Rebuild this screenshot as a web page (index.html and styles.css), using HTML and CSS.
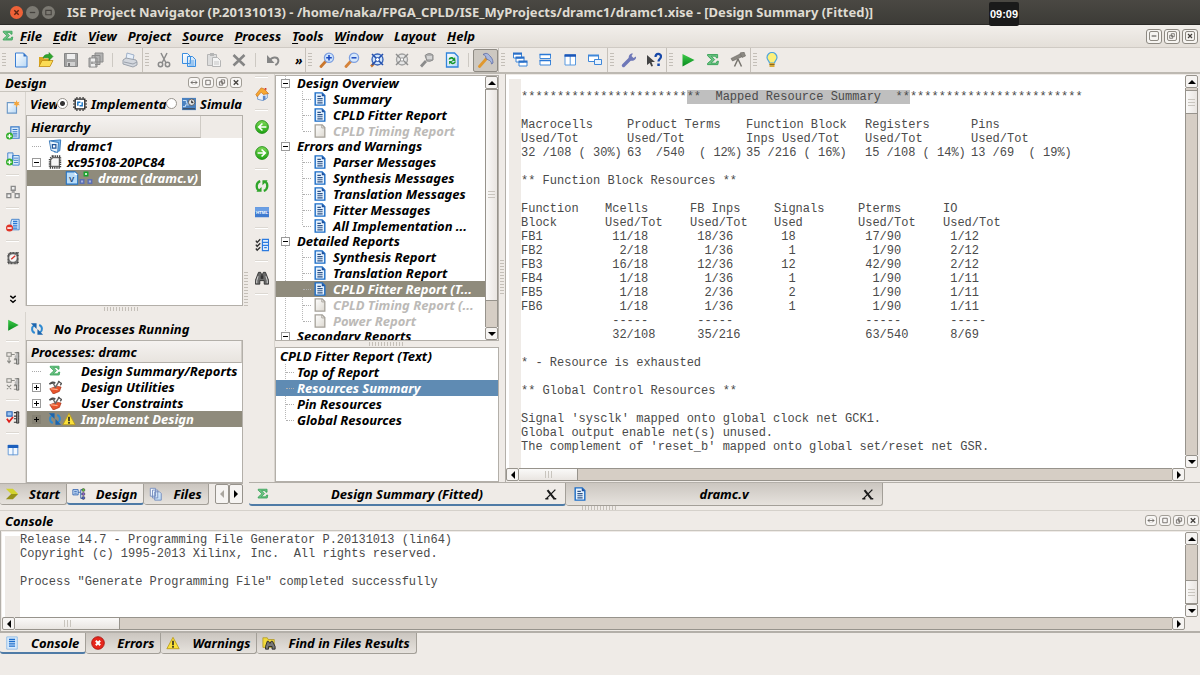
FILE: index.html
```html
<!DOCTYPE html>
<html lang="en">
<head>
    <meta charset="UTF-8">
    <meta name="viewport" content="width=device-width, initial-scale=1.0">
    <title>ISE Project Navigator</title>
    <link rel="stylesheet" href="styles.css">
</head>
<body>
    <!-- icon set -->
    <svg class="sprite" aria-hidden="true">
        <defs>
            <linearGradient id="gPaper" x1="0" y1="0" x2="1" y2="1"><stop offset="0" stop-color="#fff"/><stop offset="1" stop-color="#b9d8f5"/></linearGradient>
            <linearGradient id="gGrey" x1="0" y1="0" x2="1" y2="1"><stop offset="0" stop-color="#fff"/><stop offset="1" stop-color="#dcd8d0"/></linearGradient>
            <linearGradient id="gBall" x1="0" y1="0" x2="0" y2="1"><stop offset="0" stop-color="#7ed957"/><stop offset="1" stop-color="#1fa413"/></linearGradient>
            <linearGradient id="gPlay" x1="0" y1="0" x2="0" y2="1"><stop offset="0" stop-color="#3fcb4a"/><stop offset="1" stop-color="#068a1c"/></linearGradient>
        </defs>
        <symbol id="sigma" viewBox="-1 -1 19 19"><path d="M2 2h12v4h-1.500l-.8-2H6.500l4 4-4.200 4.300h6l1-2.300H15l-.8 4H2v-1.400L7 8.200 2 3.400z" fill="#6cc283" stroke="#2e9e50"/></symbol>
        <symbol id="new" viewBox="0 0 16 16"><path d="M2.500 1h8l3.500 3.500V15h-11.500z" fill="url(#gPaper)" stroke="#3b7fd4"/><path d="M10.500 1v3.500H14z" fill="#2f6fc4"/></symbol>
        <symbol id="open" viewBox="0 0 16 16"><path d="M1 14V5h4l1 1.500h6V14z" fill="#d9a520"/><path d="M1 14.500 4 8.500h11l-3 6z" fill="#fbdc55" stroke="#c08a10" stroke-width=".8"/><path d="M5 6C6 3 8 2 11 2.500V.5l4 4-4 4V6C9 5.500 7 5.500 5 6z" fill="#2fa52c" stroke="#157a18" stroke-width=".5"/></symbol>
        <symbol id="save" viewBox="0 0 16 16"><path d="M1.500 1.500h13v13h-13z" fill="#a2a2a2" stroke="#858585"/><path d="M4 2h8v5H4z" fill="#eee"/><path d="M4 10h8v4H4z" fill="#d0d0d0"/><path d="M5 11h2v3H5z" fill="#777"/></symbol>
        <symbol id="saveall" viewBox="0 0 16 16"><path d="M7 1h8v9H7zM4 3.500h8v9H4zM1 6h8v9H1z" fill="#b3b3b3" stroke="#8a8a8a"/><path d="M3 6.500h4v3H3zM3 12h4v2.500H3z" fill="#eee"/></symbol>
        <symbol id="print" viewBox="0 0 16 16"><path d="m5 1 7 2-1 5-7-1z" fill="#e8f0fa" stroke="#9fb0c8"/><path d="m1 8 3-2 10 2 1 2v3l-4 2L1 12z" fill="#d3d7de" stroke="#9aa1ab"/><path d="m2 10 9 2 4-2" fill="none" stroke="#9aa1ab"/></symbol>
        <symbol id="cut" viewBox="0 0 16 16"><path d="m5 1 5 10M11 1 6 11" stroke="#8a8a8a" stroke-width="1.500"/><circle cx="4.500" cy="12.500" r="2.200" fill="none" stroke="#8a8a8a" stroke-width="1.500"/><circle cx="11.500" cy="12.500" r="2.200" fill="none" stroke="#8a8a8a" stroke-width="1.500"/></symbol>
        <symbol id="copy" viewBox="0 0 16 16"><path d="M1.500 1.500h5l3 3v7h-8zM6.500 4.500h5l3 3v7h-8z" fill="url(#gPaper)" stroke="#3b8ee0"/><path d="M8 9h5M8 11h5M8 13h5" stroke="#6aa9e8"/></symbol>
        <symbol id="paste" viewBox="0 0 16 16"><path d="M1.500 2.500h9v11h-9z" fill="#ddd" stroke="#b5b5b5"/><path d="M4 1h4v3H4z" fill="#b5b5b5"/><path d="M6.500 5.500h5l3 3v6h-8z" fill="#f4f4f4" stroke="#b5b5b5"/><path d="M8 10h5M8 12h5" stroke="#c5c5c5"/></symbol>
        <symbol id="del" viewBox="0 0 16 16"><path d="m2.500 3 11 10.500M13.500 3l-11 10.500" stroke="#858585" stroke-width="2.600"/></symbol>
        <symbol id="undo" viewBox="0 0 16 16"><path d="M5 8.500C6 5 12.500 4 13.300 8c.4 2.500-1 4-3 5" fill="none" stroke="#858585" stroke-width="2"/><path d="M2 3v8h7.500z" fill="#858585"/></symbol>
        <symbol id="zoomin" viewBox="0 0 16 16"><path d="m2 14.500 5-5.500" stroke="#c9762c" stroke-width="2.800" stroke-linecap="round"/><circle cx="10" cy="5.800" r="4.600" fill="#cfe4fb" stroke="#7d9fe0" stroke-width="1.300"/><path d="M10 3v5.500M7.200 5.800h5.600" stroke="#1c49c0" stroke-width="1.600"/></symbol>
        <symbol id="zoomout" viewBox="0 0 16 16"><path d="m2 14.500 5-5.500" stroke="#d5833a" stroke-width="2.800" stroke-linecap="round"/><circle cx="10" cy="5.800" r="4.600" fill="#d6e8fb" stroke="#7d9fe0" stroke-width="1.300"/><path d="M7.500 5.800h5" stroke="#1c49c0" stroke-width="1.500"/></symbol>
        <symbol id="zoomfit" viewBox="0 0 16 16"><path d="m2 14.500 3-3" stroke="#c9762c" stroke-width="2.500"/><circle cx="8.500" cy="7.500" r="5.500" fill="#cfe4fb" stroke="#3562b8" stroke-width="1.300"/><path d="m3 2 4 4m7-4-4 4m4 7-4-4m-7 4 4-4" stroke="#234fae" stroke-width="1.600"/><circle cx="8.500" cy="7.500" r="2" fill="#fff" stroke="#234fae"/></symbol>
        <symbol id="zoomsel" viewBox="0 0 16 16"><circle cx="8" cy="7.500" r="5.500" fill="#e6e6e6" stroke="#a0a0a0" stroke-width="1.300"/><path d="m2 2 4 4m8-4-4 4m4 7-4-4m-8 4 4-4" stroke="#8d8d8d" stroke-width="1.500"/><path d="M6.500 6h3v3h-3z" fill="#fff" stroke="#999"/></symbol>
        <symbol id="mag" viewBox="0 0 16 16"><path d="m2 14.500 5-5.500" stroke="#8b8b8b" stroke-width="2.800"/><path d="M6 3.500Q10 0 14 3v5q-3 2-6 1z" fill="#b0b0b0" stroke="#8a8a8a"/><path d="M8 4h5v3H8z" fill="#d5d5d5"/></symbol>
        <symbol id="redoc" viewBox="0 0 16 16"><path d="M2.500 1h8l3.500 3.500V15h-11.500z" fill="url(#gPaper)" stroke="#2f84dc" stroke-width="1.300"/><path d="M4.500 7.500c1-3 4-3 5.500-1l1-1.500.5 4-4-.3L9 7.500c-1-1-2-1-3 0zM12 9.500c-1 3-4 3.500-5.500 1.500l-1.200 1.500L5 9l4 .2-1.500 1c1 .8 2 .6 3-.7z" fill="#15962a"/></symbol>
        <symbol id="hammer" viewBox="0 0 16 16"><path d="m1.500 14.500 7-8" stroke="#e0982e" stroke-width="2.800" stroke-linecap="round"/><path d="M5 2.500c3-2 5-1 6.500 1 2 2 3.500 4 3.500 7.500l-1.500 1c0-2-1.500-3.500-3-4L8 6.500C8 4 7 3 5 2.500z" fill="#a9b7dd" stroke="#5d6ba5" stroke-width=".8"/></symbol>
        <symbol id="cascade" viewBox="0 0 16 16"><path d="M1.500 2h8v4h-8zM4 6h8v4H4zM7 10h8v4H7z" fill="#fff" stroke="#3f87d9"/><path d="M1 1.500h9M3.500 5.500h9M6.500 9.500h9" stroke="#2a6fc8" stroke-width="2"/></symbol>
        <symbol id="tileh" viewBox="0 0 16 16"><path d="M3 2.500h10.500v4H3zM3 8.500h10.500v4.500H3z" fill="#fff" stroke="#3f87d9"/><path d="M2.500 2.500h11.500M2.500 8.500h11.500" stroke="#2a78d6" stroke-width="1.500"/></symbol>
        <symbol id="tilev" viewBox="0 0 16 16"><path d="M3 3h10.500v10H3zM8.200 4v9" fill="#fff" stroke="#5a9ae0"/><path d="M2.500 3.500h11.500" stroke="#1b56b8" stroke-width="2.500"/></symbol>
        <symbol id="wins" viewBox="0 0 16 16"><path d="M1.500 3.500h10v6h-10z" fill="#fff" stroke="#3f87d9"/><path d="M1 3.500h11" stroke="#3f87d9" stroke-width="2"/><path d="M7.500 7.500h7v5h-7z" fill="#e7f2fd" stroke="#3f87d9"/></symbol>
        <symbol id="wrench" viewBox="0 0 16 16"><path d="m2.500 13.500 7-7" stroke="#6f78b8" stroke-width="3.400" stroke-linecap="round"/><path d="M8 7C7 4 9 1 12 1.500L10.500 4l2 2L15 4.500c.5 3-2.500 5-5.500 4z" fill="#6f78b8"/></symbol>
        <symbol id="whats" viewBox="0 0 16 16"><path d="m1 3 8 7H5.500l1.500 4-1.700.6L3.800 11 1 13z" fill="#444"/><path d="M9.500 5c0-4 5.500-4 5.500-.5 0 2.500-2.500 2.500-2.500 5" fill="none" stroke="#1748a8" stroke-width="2.200"/><path d="M11.300 11.500h2.500V14h-2.500z" fill="#1748a8"/></symbol>
        <symbol id="play" viewBox="0 0 16 16"><path d="m2.500 2 12 6-12 6.500z" fill="url(#gPlay)"/></symbol>
        <symbol id="scope" viewBox="0 0 16 16"><path d="m1 6.500 9-4.500 1.500 3-9 4zM10 1l4-1 1.500 4-3.500 1.500z" fill="#8b8882" stroke="#6a6762" stroke-width=".6"/><path d="M8 7 4.500 14.500M8 7l3.500 7.500" stroke="#77746e" stroke-width="1.500"/></symbol>
        <symbol id="bulb" viewBox="0 0 16 16"><path d="M5.500 11c0-2-2.500-3-2.500-5.500a5 5 0 0 1 10 0C13 8 10.500 9 10.500 11z" fill="#fdf07a" stroke="#4fa5de" stroke-width="1.200"/><path d="M5.500 11h5v4h-5z" fill="#d7a93a"/><path d="M5.500 12.500h5" stroke="#8a6a20"/></symbol>
        <symbol id="newsrc" viewBox="0 0 16 16"><path d="M1.500 3h10.500v12h-10.500z" fill="url(#gPaper)" stroke="#6c98c6" stroke-width="1.300"/><path d="m12 0 1 2.500L15.500 2l-1.300 2.200L16 6l-2.700-.2L12 8.500l-1-2.800L8.500 6 10 4.200 8.800 2l2.400.5z" fill="#f4a63c"/></symbol>
        <symbol id="addsrc" viewBox="0 0 16 16"><path d="M5.500 1H15v13H5.500z" fill="#d8eafb" stroke="#3a7bc8" stroke-width="1.300"/><path d="M7.500 4h5.500M7.500 6.500h5.500M7.500 9h5.500M8 11.500h5" stroke="#3a7bc8" stroke-width="1.200"/><circle cx="4" cy="11.500" r="4" fill="#34b02c"/><path d="M4 9v5M1.500 11.500h5" stroke="#fff" stroke-width="1.500"/></symbol>
        <symbol id="addcopy" viewBox="0 0 16 16"><path d="M2 1h6v9H2zM7.500 4h7.500v11H7.500z" fill="#d8eafb" stroke="#3a7bc8"/><path d="M9 7h5M9 9.500h5M9 12h5" stroke="#3a7bc8"/><circle cx="4" cy="11.500" r="4" fill="#34b02c"/><path d="M4 9v5M1.500 11.500h5" stroke="#fff" stroke-width="1.500"/></symbol>
        <symbol id="blocks" viewBox="0 0 16 16"><path d="M6 1.500h4.500v4.500H6zM1 10h4.500v4.500H1zM10.500 10H15v4.500h-4.500zM6.500 8h3.500" fill="#eee" stroke="#8a8a8a" stroke-width="1.500"/></symbol>
        <symbol id="remsrc" viewBox="0 0 16 16"><path d="M6.500 1.500H15v12H5.500V5z" fill="#d8eafb" stroke="#3a7bc8"/><path d="M8 4h5M8 6.500h5M8 9h5M8 11.500h5" stroke="#2b79d3" stroke-width="1.500"/><circle cx="4" cy="11.500" r="4" fill="#e03427"/><path d="M1.500 11.500h5" stroke="#fff" stroke-width="1.800"/></symbol>
        <symbol id="gauge" viewBox="0 0 16 16"><path d="M2.500 4 5 2h8.500v12h-11z" fill="#777" stroke="#444" stroke-dasharray="1 .6" stroke-width="2"/><circle cx="8" cy="8" r="4.200" fill="#f5f5f5"/><path d="m6 9.500 4.500-4" stroke="#d3332a" stroke-width="1.600"/></symbol>
        <symbol id="chip1" viewBox="0 0 16 16"><path d="M1 2h5v4H1zM6 4h4M3.500 7v6M1.500 11l2 2.500 2-2.500" fill="none" stroke="#8b8b86" stroke-width="1.200"/><path d="M10 2h5M10 6h5M9 10h6M9 14h6" stroke="#8b8b86" stroke-width="1.300"/><path d="M12 2h2.500v13H12V9H9.500" fill="#bbb" stroke="#6a6a66"/></symbol>
        <symbol id="chip2" viewBox="0 0 16 16"><path d="M1 2h5v4H1zM6 4h4M1 9l5 5M6 9l-5 5" fill="none" stroke="#8b8b86" stroke-width="1.200"/><path d="M10 2h5M10 6h5M9 10h6M9 14h6" stroke="#8b8b86" stroke-width="1.300"/><path d="M12 2h2.500v13H12V9H9.500" fill="#bbb" stroke="#6a6a66"/></symbol>
        <symbol id="chip3" viewBox="0 0 16 16"><path d="M1 2h6v5H1z" fill="#9cc4f0" stroke="#2a66b8" stroke-width="1.300"/><path d="M9 3h6M9 7h6M9 10h6M9 14h6" stroke="#333" stroke-width="1.400"/><path d="M12 2h2.500v13H12z" fill="#888" stroke="#333"/><path d="m1 10 2.500 3.500L8 8" fill="none" stroke="#dd1f1a" stroke-width="2"/></symbol>
        <symbol id="table" viewBox="0 0 16 16"><path d="M2.500 2.500h11v11h-11zM8 3v11" fill="#f2f8ff" stroke="#5b92d4"/><path d="M2 4h12" stroke="#1c5fbd" stroke-width="3.500"/></symbol>
        <symbol id="home" viewBox="0 0 16 16"><path d="M3 8v6l6 1.500 5-3V7L9 3z" fill="#eaf1fb" stroke="#6c94c9"/><path d="M1 8.500 7 1l3 1 5.500 5.500-6 1L7 6l-4.500 5z" fill="#f7a832" stroke="#c7701a" stroke-width=".8"/><path d="M9 10h3v4.500l-3 .8z" fill="#5e88c6"/><path d="M11 1h2v3l-2-1.500z" fill="#d43a2a"/></symbol>
        <symbol id="back" viewBox="0 0 16 16"><circle cx="8" cy="8" r="7.300" fill="url(#gBall)" stroke="#1c8a12"/><path d="M13 8H5M8.500 4 4.300 8l4.200 4" fill="none" stroke="#fff" stroke-width="1.900"/></symbol>
        <symbol id="fwd" viewBox="0 0 16 16"><circle cx="8" cy="8" r="7.300" fill="url(#gBall)" stroke="#1c8a12"/><path d="M3 8h8M7.500 4l4.200 4-4.200 4" fill="none" stroke="#fff" stroke-width="1.900"/></symbol>
        <symbol id="reload" viewBox="0 0 16 16"><path d="M6 2.500C1 4 1 10.500 4 13" fill="none" stroke="#2fa52a" stroke-width="2.600"/><path d="M1.500 14.500h6V9z" fill="#2fa52a"/><path d="M10 13.500C15 12 15 5.500 12 3" fill="none" stroke="#2fa52a" stroke-width="2.600"/><path d="M14.500 1.500h-6V7z" fill="#2fa52a"/></symbol>
        <symbol id="html" viewBox="0 0 16 16"><path d="M0 2.500h16v11.500H0z" fill="#3f7bd0"/><path d="M0 2.500h16v5.500H0z" fill="#6b9fe4"/><text x="8" y="10.500" text-anchor="middle" font-size="5" font-style="normal" font-weight="bold" fill="#fff" font-family="Liberation Sans, sans-serif">HTML</text></symbol>
        <symbol id="checks" viewBox="0 0 16 16"><path d="m1 3 1.500 2L6 1.500M1 7.500l1.500 2L6 6M1 12l1.500 2L6 10.500" fill="none" stroke="#333" stroke-width="1.600"/><path d="M8.500 1.500h7v13h-7z" fill="#e3f0fd" stroke="#2c7be0" stroke-width="1.400"/><path d="M8 5h8M8 8.500h8M10.500 11h3" stroke="#2c7be0" stroke-width="1.500"/></symbol>
        <symbol id="binoc" viewBox="0 0 16 16"><path d="M4 1.500h2.500L8 5l1.500-3.500H12l3.500 9V15h-5v-4h-5v4h-5v-4.500z" fill="#6b6b6b" stroke="#262626" stroke-width=".9"/><path d="M3.500 6 2 11v3M12.500 6l1.500 5v3" stroke="#d9d9d9" stroke-width="1.100" fill="none"/><path d="M6.500 5h3v4h-3z" fill="#333"/></symbol>
        <symbol id="doc" viewBox="0 0 16 16"><path d="M2.500 1h8l3 3v11h-11z" fill="#e6f2fe" stroke="#1d6dc6" stroke-width="1.600"/><path d="M10 1v3.800h3.800z" fill="#1d4f9c"/><path d="M5 5h4M5 7.500h6M5 10h6M5 12.500h6" stroke="#2d5388" stroke-width="1.300"/></symbol>
        <symbol id="blank" viewBox="0 0 16 16"><path d="M2.500 1h8l3 3v11h-11z" fill="url(#gGrey)" stroke="#a6a29a" stroke-width="1.500"/><path d="M10 1v3.500h3.500" fill="none" stroke="#a6a29a"/></symbol>
        <symbol id="proj" viewBox="0 0 16 16"><path d="M3 2 14.500 1l-1 12.500-6 1.500z" fill="#7ab8ee" stroke="#2a6fb4"/><path d="m1.500 2 10.500 2-1 11.500L3.500 13z" fill="#e7f3fd" stroke="#2a6fb4"/><path d="M5 6.500h4v4H5z" fill="#fff" stroke="#1f559a" stroke-width="1.400"/></symbol>
        <symbol id="chip" viewBox="0 0 16 16"><path d="M3 5.500 5.500 3H13v10H3z" fill="#f6f6f6" stroke="#6a6a6a" stroke-width="1.400"/><path d="M5 1.500h9v13H2V4.500z" fill="none" stroke="#444" stroke-width="2.200" stroke-dasharray="1.500 1"/></symbol>
        <symbol id="vfile" viewBox="0 0 16 16"><path d="M1.500 1h10l3 3v11h-13z" fill="#b9dcf8" stroke="#2172c4" stroke-width="1.200"/><path d="M11 1v3.500h3.500z" fill="#fff"/><text x="7.500" y="12" text-anchor="middle" font-size="9" font-style="normal" font-weight="bold" fill="#1f4878" font-family="Liberation Sans, sans-serif">V</text></symbol>
        <symbol id="blocksc" viewBox="0 0 16 16"><path d="M6 1.500h4v4H6z" fill="#c6f0c8" stroke="#16a32a" stroke-width="1.600"/><path d="M1.500 10h4v4h-4zM10.500 10h4v4h-4z" fill="#aab5df" stroke="#5b6fb5" stroke-width="1.600"/></symbol>
        <symbol id="tools" viewBox="0 0 16 16"><path d="m2 10 8-3 5 1-2 5-7 3z" fill="#e8542c" stroke="#a02d12" stroke-width=".7"/><path d="m3 10 8 1" stroke="#ffb08a" stroke-width="1.200"/><path d="M1 4c3-3 6-3 8-1L7.500 4.500C6 4 4 4.500 2 5.500z" fill="#4d4d4d"/><path d="m6 4 3 5M13 1 8 9" stroke="#666" stroke-width="1.600"/><path d="M11.500 1.500 15.500 4 14 6" stroke="#555" fill="none" stroke-width="1.500"/></symbol>
        <symbol id="sync" viewBox="0 0 16 16"><path d="M5.500 12.500C1.500 11 1.500 6 4.500 4" fill="none" stroke="#2f8ad2" stroke-width="2.300"/><path d="M1 1.500h6.500V8z" fill="#1c65ae"/><path d="M10.500 3.500c4 1.500 4 6.500 1 8.500" fill="none" stroke="#2f8ad2" stroke-width="2.300"/><path d="M15 14.500H8.500V8z" fill="#1c65ae"/></symbol>
        <symbol id="warn" viewBox="0 0 16 16"><path d="M8 1.500 15 14.500H1z" fill="#fbe13a" stroke="#b89a1e" stroke-linejoin="round"/><path d="M8 5.500v5M8 11.500v2" stroke="#222" stroke-width="1.800"/></symbol>
        <symbol id="impl" viewBox="0 0 16 16"><path d="M2.500 2.500h11v11h-11z" fill="#fff" stroke="#222" stroke-width="1.500"/><path d="M4.500 0v2M8 0v2M11.500 0v2M4.500 14v2M8 14v2M11.500 14v2M0 4.500h2M0 8h2M0 11.500h2M14 4.500h2M14 8h2M14 11.500h2" stroke="#222" stroke-width="1.300"/><path d="M5.500 10V6h3M10.500 6v4h-3" fill="none" stroke="#1f7ac9" stroke-width="1.700"/></symbol>
        <symbol id="sim" viewBox="0 0 16 16"><path d="M0 1h16v14H0z" fill="#4b82c0"/><path d="M1 4h4v3h4M1 11h3V9h4" stroke="#d5e9fb" fill="none"/><circle cx="11" cy="6" r="3.700" fill="#e4e4e4" stroke="#555"/><path d="M11 4v2.500h2M1 13.500h14" stroke="#333"/></symbol>
        <symbol id="start" viewBox="0 0 16 16"><path d="M1 2h8l6 6H7z" fill="#d3d32f"/><path d="M7 8h8l-6 6H1z" fill="#96921a"/></symbol>
        <symbol id="design" viewBox="0 0 16 16"><path d="M1 3h6v6H1z" fill="#d5e7fb" stroke="#2b5fae"/><path d="M2.500 5h3M2.500 7h3M7 6h3M10 3v10M10 3h2M10 8h2M10 13h2" stroke="#2b5fae"/><circle cx="13" cy="3.500" r="1.700" fill="#5fc23a" stroke="#333" stroke-width=".6"/><circle cx="13" cy="8" r="1.700" fill="#8a5fd0" stroke="#333" stroke-width=".6"/><circle cx="13" cy="12.500" r="1.700" fill="#4c62c8" stroke="#333" stroke-width=".6"/></symbol>
        <symbol id="files" viewBox="0 0 16 16"><path d="M1.500 1.500h6v9h-6zM4 3.500h6v9H4zM6.500 5.500H12l2 2v7.500H6.500z" fill="url(#gPaper)" stroke="#7089bd"/></symbol>
        <symbol id="list" viewBox="0 0 16 16"><path d="M2 1h12v14H2z" fill="#d9ebfc" stroke="#8db9e5"/><path d="M4.500 4h7M4.500 6.500h7M4.500 9h7M4.500 11.500h7" stroke="#1b6dcc" stroke-width="1.500"/></symbol>
        <symbol id="error" viewBox="0 0 16 16"><circle cx="8" cy="8" r="7.200" fill="#e6261c" stroke="#a81410"/><path d="m5.500 5.500 5 5m0-5-5 5" stroke="#fff" stroke-width="2.300"/></symbol>
        <symbol id="find" viewBox="0 0 16 16"><path d="M1 2h5l1 2h7v9H1z" fill="#f2da3a" stroke="#a88f1c" stroke-width=".8"/><path d="M6 6h1.500L9 8.500 10.500 6H12l3 6v3h-3.500v-3h-4v3H4v-3z" fill="#777" stroke="#222"/></symbol>
        <symbol id="cross" viewBox="0 0 16 16"><path d="M4 3.500 11.500 13" stroke="#1a1a1a" stroke-width="2.400"/><path d="M13 3 3 13M1.500 13.500h3.500M10.500 13.500H14" stroke="#1a1a1a" stroke-width="1.600"/></symbol>
        <symbol id="dfloat" viewBox="0 0 12 12"><path d="M2 6h8M4.500 3.500 2 6l2.500 2.500M7.500 3.500 10 6 7.500 8.500" fill="none" stroke="#55524d"/></symbol>
        <symbol id="dmax" viewBox="0 0 12 12"><path d="M3 3h6v6H3z" fill="none" stroke="#55524d"/></symbol>
        <symbol id="drest" viewBox="0 0 12 12"><path d="M5 2.500h4.500V7H5zM2.500 5H7v4.500H2.500z" fill="none" stroke="#55524d"/></symbol>
        <symbol id="dclose" viewBox="0 0 12 12"><path d="m3 3 6 6m0-6L3 9" stroke="#45423e" stroke-width="1.800"/></symbol>
        <symbol id="dmin" viewBox="0 0 12 12"><path d="M2.500 6h7" stroke="#45423e" stroke-width="1.500"/></symbol>
        <symbol id="wclose" viewBox="0 0 12 12"><path d="m4 4 4 4m0-4L4 8" stroke="#5c2412" stroke-width="1.300"/></symbol>
        <symbol id="wmax" viewBox="0 0 12 12"><path d="M3.500 4h5v4h-5z" fill="none" stroke="#45423e"/></symbol>
        <symbol id="wmin" viewBox="0 0 12 12"><path d="M3.500 6h5" stroke="#45423e" stroke-width="1.200"/></symbol>
        <symbol id="chev" viewBox="0 0 8 10"><path d="m1 1 3 2.500L7 1M1 5.500 4 8l3-2.500" fill="none" stroke="#000" stroke-width="1.600"/></symbol>
    </svg>

    <header class="titlebar">
        <button class="wm wm-close" aria-label="Close window"><svg><use href="#wclose"/></svg></button>
        <button class="wm" aria-label="Minimize window"><svg><use href="#wmin"/></svg></button>
        <button class="wm" aria-label="Maximize window"><svg><use href="#wmax"/></svg></button>
        <h1 class="title">ISE Project Navigator (P.20131013) - /home/naka/FPGA_CPLD/ISE_MyProjects/dramc1/dramc1.xise - [Design Summary (Fitted)]</h1>
        <time class="clock">09:09</time>
    </header>

    <nav class="menubar">
        <svg class="ic14"><use href="#sigma"/></svg>
        <button><u>F</u>ile</button>
        <button><u>E</u>dit</button>
        <button><u>V</u>iew</button>
        <button>P<u>r</u>oject</button>
        <button><u>S</u>ource</button>
        <button><u>P</u>rocess</button>
        <button><u>T</u>ools</button>
        <button><u>W</u>indow</button>
        <button>La<u>y</u>out</button>
        <button><u>H</u>elp</button>
        <div class="mdi">
            <button aria-label="Minimize"><svg><use href="#dmin"/></svg></button>
            <button aria-label="Restore"><svg><use href="#drest"/></svg></button>
            <button aria-label="Close"><svg><use href="#dclose"/></svg></button>
        </div>
    </nav>

    <div class="toolbar">
        <div class="group">
            <i class="grip"></i>
            <button aria-label="New"><svg><use href="#new"/></svg></button>
            <button aria-label="Open"><svg><use href="#open"/></svg></button>
            <button aria-label="Save"><svg><use href="#save"/></svg></button>
            <button aria-label="Save all"><svg><use href="#saveall"/></svg></button>
            <i class="sep"></i>
            <button aria-label="Print"><svg><use href="#print"/></svg></button>
        </div>
        <div class="group">
            <i class="grip"></i>
            <button aria-label="Cut"><svg><use href="#cut"/></svg></button>
            <button aria-label="Copy"><svg><use href="#copy"/></svg></button>
            <button aria-label="Paste"><svg><use href="#paste"/></svg></button>
            <button aria-label="Delete"><svg><use href="#del"/></svg></button>
            <i class="sep"></i>
            <button aria-label="Undo"><svg><use href="#undo"/></svg></button>
            <button class="more" aria-label="More">»</button>
        </div>
        <div class="group">
            <i class="grip"></i>
            <button aria-label="Zoom in"><svg><use href="#zoomin"/></svg></button>
            <button aria-label="Zoom out"><svg><use href="#zoomout"/></svg></button>
            <button aria-label="Zoom to fit"><svg><use href="#zoomfit"/></svg></button>
            <button aria-label="Zoom to selection"><svg><use href="#zoomsel"/></svg></button>
            <button aria-label="Zoom box"><svg><use href="#mag"/></svg></button>
            <button aria-label="Refresh"><svg><use href="#redoc"/></svg></button>
            <i class="sep"></i>
            <button class="pressed" aria-label="Build"><svg><use href="#hammer"/></svg></button>
        </div>
        <div class="group">
            <i class="grip"></i>
            <button aria-label="Cascade"><svg><use href="#cascade"/></svg></button>
            <button aria-label="Tile horizontally"><svg><use href="#tileh"/></svg></button>
            <button aria-label="Tile vertically"><svg><use href="#tilev"/></svg></button>
            <button aria-label="Float"><svg><use href="#wins"/></svg></button>
        </div>
        <div class="group">
            <i class="grip"></i>
            <button aria-label="Settings"><svg><use href="#wrench"/></svg></button>
            <button aria-label="What's this"><svg><use href="#whats"/></svg></button>
        </div>
        <div class="group">
            <i class="grip"></i>
            <button aria-label="Run"><svg><use href="#play"/></svg></button>
            <button aria-label="Summary"><svg><use href="#sigma"/></svg></button>
            <button aria-label="Analyze"><svg><use href="#scope"/></svg></button>
        </div>
        <div class="group last">
            <i class="grip"></i>
            <button aria-label="Tips"><svg><use href="#bulb"/></svg></button>
        </div>
    </div>

    <main class="work">
        <!-- design dock -->
        <aside class="dock">
            <div class="dock-head">
                <h2>Design</h2>
                <div class="dock-btns">
                    <button aria-label="Float"><svg><use href="#dfloat"/></svg></button>
                    <button aria-label="Maximize"><svg><use href="#dmax"/></svg></button>
                    <button aria-label="Restore"><svg><use href="#drest"/></svg></button>
                    <button aria-label="Close"><svg><use href="#dclose"/></svg></button>
                </div>
            </div>

            <section class="dock-part grow">
                <div class="strip">
                    <button aria-label="New source"><svg><use href="#newsrc"/></svg></button>
                    <button aria-label="Add source"><svg><use href="#addsrc"/></svg></button>
                    <button aria-label="Add copy of source"><svg><use href="#addcopy"/></svg></button>
                    <i class="hsep"></i>
                    <button aria-label="Library"><svg><use href="#blocks"/></svg></button>
                    <i class="hsep"></i>
                    <button aria-label="Remove source"><svg><use href="#remsrc"/></svg></button>
                    <i class="hsep"></i>
                    <button aria-label="Goals"><svg><use href="#gauge"/></svg></button>
                    <button class="down" aria-label="More"><svg><use href="#chev"/></svg></button>
                </div>
                <div class="dock-body">
                    <div class="view-row">
                        <span class="view-text">View</span>
                        <input type="radio" name="view" id="v-impl" checked>
                        <label for="v-impl" class="view-impl"><svg class="ic14"><use href="#impl"/></svg><span>Implementa</span></label>
                        <input type="radio" name="view" id="v-sim">
                        <label for="v-sim" class="view-sim"><svg class="ic14"><use href="#sim"/></svg><span>Simula</span></label>
                    </div>
                    <div class="box grow">
                        <div class="col-head"><span>Hierarchy</span></div>
                        <ul class="tree hier">
                            <li><i class="stub"></i><svg class="ic14"><use href="#proj"/></svg><span>dramc1</span></li>
                            <li><button class="tog" aria-label="Collapse"></button><svg class="ic14"><use href="#chip"/></svg><span>xc95108-20PC84</span></li>
                            <li class="sel lvl2"><svg class="ic14"><use href="#vfile"/></svg><svg class="ic14"><use href="#blocksc"/></svg><span>dramc (dramc.v)</span></li>
                        </ul>
                    </div>
                </div>
            </section>

            <div class="split-h"><i></i></div>

            <section class="dock-part">
                <div class="strip">
                    <button aria-label="Run process"><svg><use href="#play"/></svg></button>
                    <i class="hsep"></i>
                    <button aria-label="Run all"><svg><use href="#chip1"/></svg></button>
                    <button aria-label="Stop"><svg><use href="#chip2"/></svg></button>
                    <i class="hsep"></i>
                    <button aria-label="Check"><svg><use href="#chip3"/></svg></button>
                    <i class="hsep"></i>
                    <button aria-label="Properties"><svg><use href="#table"/></svg></button>
                </div>
                <div class="dock-body">
                    <p class="status"><svg class="ic14"><use href="#sync"/></svg>No Processes Running</p>
                    <div class="box procs">
                        <div class="col-head wide"><span>Processes: dramc</span></div>
                        <ul class="tree proc">
                            <li><i class="stub"></i><svg class="ic14"><use href="#sigma"/></svg><span>Design Summary/Reports</span></li>
                            <li><button class="tog plus" aria-label="Expand"></button><svg class="ic14"><use href="#tools"/></svg><span>Design Utilities</span></li>
                            <li><button class="tog plus" aria-label="Expand"></button><svg class="ic14"><use href="#tools"/></svg><span>User Constraints</span></li>
                            <li class="sel"><button class="tog plus" aria-label="Expand"></button><svg class="ic14"><use href="#sync"/></svg><svg class="ic14"><use href="#warn"/></svg><span>Implement Design</span></li>
                        </ul>
                    </div>
                </div>
            </section>

            <div class="tabs dock-tabs">
                <button class="tab"><svg><use href="#start"/></svg>Start</button>
                <button class="tab active"><svg><use href="#design"/></svg>Design</button>
                <button class="tab"><svg><use href="#files"/></svg>Files</button>
                <div class="tab-nav">
                    <button class="arrow left dim" aria-label="Previous tab"></button>
                    <button class="arrow right" aria-label="Next tab"></button>
                </div>
            </div>
        </aside>

        <div class="split-v"><i></i></div>

        <!-- document area -->
        <section class="docs">
            <div class="doc-body">
                <div class="strip side">
                    <i class="hsep"></i>
                    <button aria-label="Home"><svg><use href="#home"/></svg></button>
                    <i class="hsep"></i>
                    <button aria-label="Back"><svg><use href="#back"/></svg></button>
                    <button aria-label="Forward"><svg><use href="#fwd"/></svg></button>
                    <i class="hsep"></i>
                    <button aria-label="Reload"><svg><use href="#reload"/></svg></button>
                    <button aria-label="HTML"><svg><use href="#html"/></svg></button>
                    <i class="hsep"></i>
                    <button aria-label="Customize"><svg><use href="#checks"/></svg></button>
                    <i class="hsep"></i>
                    <button aria-label="Find"><svg><use href="#binoc"/></svg></button>
                    <i class="hsep"></i>
                </div>

                <div class="reports">
                    <div class="box reports-box">
                        <div class="reports-tree">
                            <h3><button class="tog" aria-label="Collapse"></button>Design Overview</h3>
                            <ul>
                                <li><svg class="ic14"><use href="#doc"/></svg>Summary</li>
                                <li><svg class="ic14"><use href="#doc"/></svg>CPLD Fitter Report</li>
                                <li class="off"><svg class="ic14"><use href="#blank"/></svg>CPLD Timing Report</li>
                            </ul>
                            <h3><button class="tog" aria-label="Collapse"></button>Errors and Warnings</h3>
                            <ul>
                                <li><svg class="ic14"><use href="#doc"/></svg>Parser Messages</li>
                                <li><svg class="ic14"><use href="#doc"/></svg>Synthesis Messages</li>
                                <li><svg class="ic14"><use href="#doc"/></svg>Translation Messages</li>
                                <li><svg class="ic14"><use href="#doc"/></svg>Fitter Messages</li>
                                <li><svg class="ic14"><use href="#doc"/></svg>All Implementation ...</li>
                            </ul>
                            <h3><button class="tog" aria-label="Collapse"></button>Detailed Reports</h3>
                            <ul>
                                <li><svg class="ic14"><use href="#doc"/></svg>Synthesis Report</li>
                                <li><svg class="ic14"><use href="#doc"/></svg>Translation Report</li>
                                <li class="sel"><svg class="ic14"><use href="#doc"/></svg>CPLD Fitter Report (T...</li>
                                <li class="off"><svg class="ic14"><use href="#blank"/></svg>CPLD Timing Report (...</li>
                                <li class="off"><svg class="ic14"><use href="#blank"/></svg>Power Report</li>
                            </ul>
                            <h3><button class="tog" aria-label="Collapse"></button>Secondary Reports</h3>
                        </div>
                        <div class="vscroll">
                            <button class="arrow up" aria-label="Scroll up"></button>
                            <div class="trough"><i class="thumb tall"></i></div>
                            <button class="arrow dn" aria-label="Scroll down"></button>
                        </div>
                    </div>
                    <div class="split-h"><i></i></div>
                    <div class="box index">
                        <h3>CPLD Fitter Report (Text)</h3>
                        <ul>
                            <li>Top of Report</li>
                            <li class="sel-blue">Resources Summary</li>
                            <li>Pin Resources</li>
                            <li>Global Resources</li>
                        </ul>
                    </div>
                </div>

                <div class="split-v"><i></i></div>

                <div class="viewer">
                    <div class="pane">
                        <div class="gutter"></div>
                        <article class="text report">
                            <p>***********************<mark>**  Mapped Resource Summary  **</mark>************************</p>
                            <table>
                                <colgroup><col class="w106"><col class="w119"><col class="w119"><col class="w106"><col class="w106"></colgroup>
                                <tr><th>Macrocells</th><th>Product Terms</th><th>Function Block</th><th>Registers</th><th>Pins</th></tr>
                                <tr><th>Used/Tot</th><th>Used/Tot</th><th>Inps Used/Tot</th><th>Used/Tot</th><th>Used/Tot</th></tr>
                                <tr><td>32 /108 ( 30%)</td><td>63  /540  ( 12%)</td><td>35 /216 ( 16%)</td><td>15 /108 ( 14%)</td><td>13 /69  ( 19%)</td></tr>
                            </table>
                            <p>** Function Block Resources **</p>
                            <table>
                                <colgroup><col class="w84"><col class="w85"><col class="w84"><col class="w84"><col class="w85"><col class="w84"></colgroup>
                                <tr><th>Function</th><th>Mcells</th><th>FB Inps</th><th>Signals</th><th>Pterms</th><th>IO</th></tr>
                                <tr><th>Block</th><th>Used/Tot</th><th>Used/Tot</th><th>Used</th><th>Used/Tot</th><th>Used/Tot</th></tr>
                                <tr><td>FB1</td><td> 11/18</td><td> 18/36</td><td> 18</td><td> 17/90</td><td> 1/12</td></tr>
                                <tr><td>FB2</td><td>  2/18</td><td>  1/36</td><td>  1</td><td>  1/90</td><td> 2/12</td></tr>
                                <tr><td>FB3</td><td> 16/18</td><td> 12/36</td><td> 12</td><td> 42/90</td><td> 2/12</td></tr>
                                <tr><td>FB4</td><td>  1/18</td><td>  1/36</td><td>  1</td><td>  1/90</td><td> 1/11</td></tr>
                                <tr><td>FB5</td><td>  1/18</td><td>  2/36</td><td>  2</td><td>  1/90</td><td> 1/11</td></tr>
                                <tr><td>FB6</td><td>  1/18</td><td>  1/36</td><td>  1</td><td>  1/90</td><td> 1/11</td></tr>
                                <tr><td></td><td> -----</td><td> -----</td><td></td><td> -----</td><td> -----</td></tr>
                                <tr><td></td><td> 32/108</td><td> 35/216</td><td></td><td> 63/540</td><td> 8/69</td></tr>
                            </table>
                            <p>* - Resource is exhausted</p>
                            <p>** Global Control Resources **</p>
                            <p>Signal 'sysclk' mapped onto global clock net GCK1.
Global output enable net(s) unused.
The complement of 'reset_b' mapped onto global set/reset net GSR.</p>
                        </article>
                        <div class="vscroll">
                            <button class="arrow up" aria-label="Scroll up"></button>
                            <div class="trough near-top"><i class="thumb"></i></div>
                            <button class="arrow dn" aria-label="Scroll down"></button>
                        </div>
                    </div>
                    <div class="hscroll">
                        <button class="arrow left" aria-label="Scroll left"></button>
                        <div class="trough"><i class="thumb"></i></div>
                        <button class="arrow right" aria-label="Scroll right"></button>
                    </div>
                </div>
            </div>

            <div class="tabs doc-tabs">
                <div class="tab active"><svg><use href="#sigma"/></svg><span>Design Summary (Fitted)</span><button aria-label="Close tab"><svg><use href="#cross"/></svg></button></div>
                <div class="tab"><svg><use href="#doc"/></svg><span>dramc.v</span><button aria-label="Close tab"><svg><use href="#cross"/></svg></button></div>
            </div>
        </section>
    </main>

    <div class="split-h main-split"><i></i></div>

    <!-- console -->
    <section class="console">
        <div class="dock-head">
            <h2>Console</h2>
            <div class="dock-btns">
                <button aria-label="Float"><svg><use href="#dfloat"/></svg></button>
                <button aria-label="Maximize"><svg><use href="#dmax"/></svg></button>
                <button aria-label="Restore"><svg><use href="#drest"/></svg></button>
                <button aria-label="Close"><svg><use href="#dclose"/></svg></button>
            </div>
        </div>
        <div class="viewer log">
            <div class="pane">
                <div class="gutter"></div>
                <pre class="text">Release 14.7 - Programming File Generator P.20131013 (lin64)
Copyright (c) 1995-2013 Xilinx, Inc.  All rights reserved.

Process "Generate Programming File" completed successfully</pre>
                <div class="vscroll">
                    <button class="arrow up" aria-label="Scroll up"></button>
                    <div class="trough at-end"><i class="thumb"></i></div>
                    <button class="arrow dn" aria-label="Scroll down"></button>
                </div>
            </div>
            <div class="hscroll">
                <button class="arrow left" aria-label="Scroll left"></button>
                <div class="trough"><i class="thumb long"></i></div>
                <button class="arrow right" aria-label="Scroll right"></button>
            </div>
        </div>
        <div class="tabs log-tabs">
            <button class="tab active"><svg><use href="#list"/></svg>Console</button>
            <button class="tab"><svg><use href="#error"/></svg>Errors</button>
            <button class="tab"><svg><use href="#warn"/></svg>Warnings</button>
            <button class="tab"><svg><use href="#find"/></svg>Find in Files Results</button>
        </div>
    </section>
</body>
</html>
```
FILE: styles.css
```css
/* page styles */
* {
    box-sizing: border-box;
}

body {
    margin: 0;
    padding-bottom: 21px;
    height: 100vh;
    display: flex;
    flex-direction: column;
    background-color: #efebe7;
    color: #000000;
    font: italic bold 13px/16px "Noto Sans", "Open Sans", sans-serif;
    overflow: hidden;
}

.sprite {
    position: absolute;
    width: 0;
    height: 0;
    overflow: hidden;
}

h1, h2, h3, p, ul, pre {
    margin: 0;
    padding: 0;
    font: inherit;
}

ul {
    list-style: none;
}

button {
    font: inherit;
    color: inherit;
    background: none;
    border: none;
    padding: 0;
    margin: 0;
}

svg {
    width: 16px;
    height: 16px;
    flex: none;
    display: block;
}

.ic14 {
    width: 14px;
    height: 14px;
}

.grow {
    flex: 1;
}

/* title bar */
.titlebar {
    position: relative;
    flex: none;
    display: flex;
    align-items: center;
    gap: 3px;
    height: 25px;
    padding-left: 10px;
    background: linear-gradient(#4a4843, #3c3b37);
    border-bottom: 1px solid #2b2a27;
    color: #dfdbd2;
}

.wm {
    width: 13px;
    height: 13px;
    border-radius: 50%;
    background-color: #7b7972;
}

.wm-close {
    background-color: #ee6238;
}

.wm svg {
    width: 13px;
    height: 13px;
}

.title {
    font-style: normal;
    margin-left: 9px;
    white-space: nowrap;
}

.clock {
    position: absolute;
    left: 989px;
    top: 2px;
    width: 30px;
    height: 24px;
    border-radius: 2px;
    background-color: #1a1a1a;
    color: #ffffff;
    font: bold 11px/24px "Liberation Sans", sans-serif;
    text-align: center;
}

/* menu bar */
.menubar {
    flex: none;
    display: flex;
    align-items: center;
    gap: 11px;
    height: 22px;
    padding-left: 1px;
    background: linear-gradient(#f2efeb, #e4dfd9);
}

.menubar .ic14 {
    margin-right: -6px;
}

.menubar u {
    text-underline-offset: 2px;
    text-decoration-thickness: 1px;
}

.mdi {
    display: flex;
    gap: 2px;
    margin-left: auto;
    padding-right: 2px;
}

.mdi button {
    display: flex;
    align-items: center;
    justify-content: center;
    width: 16px;
    height: 15px;
    border: 1px solid #8d8982;
    border-radius: 3px;
    background-color: #f6f4f1;
}

.mdi svg {
    width: 10px;
    height: 10px;
    border: 1px solid #8d8982;
    border-radius: 2px;
}

/* toolbars */
.toolbar {
    flex: none;
    display: flex;
    height: 27px;
    border-top: 1px solid #cfcac4;
    border-bottom: 2px solid #bdb9b2;
}

.group {
    display: flex;
    align-items: center;
    border-right: 1px solid #c6c1ba;
}

.group.last {
    border-right: none;
}

.group button {
    width: 25px;
    height: 23px;
    display: flex;
    align-items: center;
    justify-content: center;
}

.group .more {
    width: 20px;
    padding-left: 8px;
}

.group .pressed {
    border: 1px solid #8f8b84;
    border-radius: 2px;
    background-color: #cdc8c1;
}

.grip {
    width: 4px;
    height: 15px;
    margin: 0 2px;
    background: repeating-linear-gradient(#c4bfb8 0 1px, #efebe7 1px 3px);
}

.sep {
    width: 1px;
    height: 14px;
    margin: 0 4px;
    background-color: #cdc9c3;
}

/* left and side icon strips */
.strip {
    flex: none;
    display: flex;
    flex-direction: column;
    align-items: center;
    width: 26px;
    border-right: 1px solid #d8d4ce;
}

.strip button {
    height: 26px;
    display: flex;
    align-items: center;
}

.strip .down {
    margin-top: auto;
    height: 13px;
}

.strip svg {
    width: 14px;
    height: 14px;
}

.strip .down svg {
    width: 8px;
    height: 9px;
}

.hsep {
    width: 13px;
    height: 1px;
    margin: 3px 0;
    background-color: #ffffff;
    box-shadow: 0 -1px 0 #dcd8d2;
}

/* layout of the work area */
.work {
    flex: 1;
    display: flex;
    min-height: 0;
}

.dock {
    flex: none;
    width: 243px;
    display: flex;
    flex-direction: column;
}

.dock-head {
    display: flex;
    align-items: center;
    justify-content: space-between;
    height: 18px;
    padding: 0 1px 0 5px;
    border-bottom: 1px solid #c9c5be;
}

.dock-btns {
    display: flex;
    gap: 2px;
}

.dock-btns button {
    width: 12px;
    height: 11px;
    border: 1px solid #a19d96;
    border-radius: 3px;
    background-color: #f8f6f4;
}

.dock-btns svg {
    width: 10px;
    height: 9px;
}

.dock-part {
    display: flex;
    min-height: 0;
}

.dock-part.grow .strip {
    padding-top: 2px;
}

.dock-body {
    flex: 1;
    min-width: 0;
    display: flex;
    flex-direction: column;
}

.box {
    border: 1px solid #b3afa9;
    background-color: #ffffff;
}

.view-row {
    display: flex;
    align-items: center;
    height: 23px;
    padding-left: 4px;
    overflow: hidden;
}

.view-text {
    flex: none;
    width: 27px;
    overflow: hidden;
}

.view-row label {
    display: flex;
    align-items: center;
    gap: 4px;
    overflow: hidden;
}

.view-impl {
    flex: none;
    width: 93px;
}

.view-sim {
    flex: 1;
}

input[type="radio"] {
    appearance: none;
    flex: none;
    width: 11px;
    height: 11px;
    margin: 0 5px 0 0;
    border: 1px solid #98948d;
    border-radius: 50%;
    background-color: #ffffff;
}

input[type="radio"]:checked {
    background: radial-gradient(#333333 0 2px, #ffffff 3px);
}

.col-head {
    display: flex;
    height: 22px;
    background: #efebe7;
}

.col-head span {
    width: 174px;
    padding: 3px 4px;
    border-bottom: 1px solid #b3afa9;
    border-right: 1px solid #cfcbc5;
    background: linear-gradient(#f5f2f0, #e8e4df);
}

.col-head.wide span {
    flex: 1;
}

/* trees */
.tree li {
    display: flex;
    align-items: center;
    height: 16px;
    padding-left: 5px;
    white-space: nowrap;
}

.tree svg:first-of-type {
    margin-left: 7px;
}

.hier li span {
    margin-left: 5px;
}

.hier .lvl2 {
    width: 174px;
    padding-left: 31px;
}

.proc li span {
    margin-left: auto;
    width: 161px;
}

.stub {
    width: 9px;
    border-top: 1px dotted #aaaaaa;
}

.sel {
    background-color: #8f8b7c;
    color: #ffffff;
}

.off {
    color: #bcbab7;
}

.tog {
    flex: none;
    width: 9px;
    height: 9px;
    border: 1px solid #9a9a9a;
    background: linear-gradient(#000000, #000000) center / 5px 1px no-repeat #ffffff;
}

.tog.plus {
    background:
        linear-gradient(#000000, #000000) center / 5px 1px no-repeat,
        linear-gradient(#000000, #000000) center / 1px 5px no-repeat,
        #ffffff;
}

.sel .tog {
    border-color: #858173;
    background-color: #858173;
}

.status {
    display: flex;
    align-items: center;
    gap: 10px;
    height: 22px;
    margin-top: 6px;
    padding-left: 4px;
}

.procs {
    height: 143px;
}

/* splitters */
.split-h {
    flex: none;
    height: 6px;
    display: flex;
    align-items: center;
    justify-content: center;
}

.split-h i {
    width: 36px;
    height: 4px;
    background: repeating-linear-gradient(90deg, #c4bfb8 0 1px, #efebe7 1px 3px);
}

.split-v {
    flex: none;
    width: 6px;
    display: flex;
    align-items: center;
    justify-content: center;
}

.split-v i {
    width: 4px;
    height: 36px;
    background: repeating-linear-gradient(#c4bfb8 0 1px, #efebe7 1px 3px);
}

.main-split {
    height: 5px;
    border-bottom: 1px solid #d5d1cb;
}

/* tabs */
.tabs {
    flex: none;
    display: flex;
    border-top: 1px solid #b3afa9;
}

.tab {
    display: flex;
    align-items: center;
    height: 21px;
    padding: 0 4px;
    border: 1px solid #a39f98;
    border-top: none;
    border-left: none;
    border-radius: 0 0 3px 3px;
    background: linear-gradient(#cbc6c0, #e6e2dd);
}

.tab svg {
    width: 14px;
    height: 14px;
}

.tab.active {
    background: #efebe7;
    border-bottom: 2px solid #4f7ba6;
}

.dock-tabs {
    padding-bottom: 1px;
}

.dock-tabs .tab {
    flex: none;
    gap: 10px;
    padding: 0 6px 0 5px;
}

.tab-nav {
    display: flex;
    margin-left: auto;
}

.tab-nav .arrow {
    width: 14px;
    height: 20px;
}

.doc-tabs .tab {
    width: 317px;
    height: 23px;
    justify-content: space-between;
    padding: 0 7px;
}

.log-tabs .tab {
    gap: 12px;
    padding: 0 6px 0 5px;
}

/* documents */
.docs {
    flex: 1;
    min-width: 0;
    display: flex;
    flex-direction: column;
}

.doc-body {
    flex: 1;
    display: flex;
    min-height: 0;
}

.reports {
    flex: none;
    width: 224px;
    display: flex;
    flex-direction: column;
    min-height: 0;
    padding-top: 1px;
}

.reports-box {
    flex: 1;
    display: flex;
    min-height: 0;
    overflow: hidden;
}

.reports-tree {
    flex: 1;
    overflow: hidden;
    white-space: nowrap;
    background: repeating-linear-gradient(#b8b8b8 0 1px, #ffffff 1px 2px) 9px 0 / 1px 100% no-repeat;
}

.reports-tree h3 {
    display: flex;
    align-items: center;
    gap: 7px;
    height: 15px;
    line-height: 15px;
    padding-left: 5px;
}

.reports-tree ul {
    background: repeating-linear-gradient(#b8b8b8 0 1px, #ffffff 1px 2px) 26px 0 / 1px calc(100% - 8px) no-repeat;
}

.reports-tree li {
    display: flex;
    align-items: center;
    height: 16px;
    padding-left: 27px;
}

.reports-tree li::before {
    content: "";
    width: 8px;
    border-top: 1px dotted #b0b0b0;
}

.reports-tree li svg {
    margin: 0 6px 0 2px;
}

.index {
    flex: none;
    height: 135px;
}

.index h3 {
    padding: 0 4px;
}

.index ul {
    background: repeating-linear-gradient(#b8b8b8 0 1px, #ffffff 1px 2px) 9px 0 / 1px calc(100% - 8px) no-repeat;
}

.index li {
    display: flex;
    align-items: center;
    height: 16px;
    padding-left: 10px;
}

.index li::before {
    content: "";
    width: 8px;
    margin-right: 3px;
    border-top: 1px dotted #b0b0b0;
}

.sel-blue {
    background-color: #5f8bb3;
    color: #ffffff;
}

/* text viewers */
.viewer {
    flex: 1;
    min-width: 0;
    display: flex;
    flex-direction: column;
    padding: 1px 2px 1px 0;
    border-left: 1px solid #b3afa9;
}

.pane {
    flex: 1;
    display: flex;
    min-height: 0;
    background-color: #ffffff;
}

.gutter {
    width: 12px;
    margin: 4px 0 0 3px;
    background-color: #efebe7;
}

.text {
    flex: 1;
    min-width: 0;
    padding-top: 1px;
    overflow: hidden;
    color: #4a4a4a;
    font: 12px/14px "Liberation Mono", monospace;
}

.report {
    padding-top: 15px;
}

.report p {
    margin-bottom: 14px;
    white-space: pre;
}

.report table {
    table-layout: fixed;
    width: 0;
    border-collapse: collapse;
    margin-bottom: 14px;
    font: inherit;
}

.report tr {
    height: 14px;
}

.report th, .report td {
    padding: 0;
    text-align: left;
    font-weight: normal;
    vertical-align: top;
    white-space: pre;
}

.w84 {
    width: 84px;
}

.w85 {
    width: 85px;
}

.w106 {
    width: 106px;
}

.w119 {
    width: 119px;
}

mark {
    background-color: #bfbfbf;
    color: inherit;
}

/* scroll bars */
.vscroll {
    flex: none;
    display: flex;
    flex-direction: column;
    width: 13px;
}

.hscroll {
    flex: none;
    display: flex;
    height: 13px;
    margin-right: 13px;
}

.arrow {
    flex: none;
    display: flex;
    align-items: center;
    justify-content: center;
    width: 13px;
    height: 13px;
    border: 1px solid #97938c;
    border-radius: 2px;
    background-color: #f6f4f2;
}

.arrow::before {
    content: "";
    border: 4px solid transparent;
}

.arrow.up::before {
    border-bottom-color: #000000;
    border-top: none;
}

.arrow.dn::before {
    border-top-color: #000000;
    border-bottom: none;
}

.arrow.left::before {
    border-right-color: #000000;
    border-left: none;
}

.arrow.right::before {
    border-left-color: #000000;
    border-right: none;
}

.arrow.dim::before {
    border-right-color: #aaa69f;
}

.trough {
    flex: 1;
    display: flex;
    background-color: #d6cec5;
    border: 1px solid #97938c;
}

.vscroll .trough {
    flex-direction: column;
    border-width: 0 1px;
}

.hscroll .trough {
    border-width: 1px 0;
}

.thumb {
    height: 24px;
    border: solid #97938c;
    border-width: 1px 0;
    background:
        repeating-linear-gradient(#c9c5be 0 1px, transparent 1px 3px) center / 7px 7px no-repeat,
        linear-gradient(90deg, #faf9f8, #e9e5e1);
}

.thumb.tall {
    height: 89%;
}

.near-top {
    padding-top: 2px;
}

.at-end {
    justify-content: flex-end;
}

.hscroll .thumb {
    width: 59px;
    height: auto;
    border-width: 0 1px 0 0;
    background:
        repeating-linear-gradient(90deg, #c9c5be 0 1px, transparent 1px 3px) center / 7px 7px no-repeat,
        linear-gradient(#faf9f8, #e9e5e1);
}

.hscroll .thumb.long {
    width: 105px;
}

/* console */
.console {
    flex: none;
}

.console .dock-head {
    height: 20px;
}

.log {
    padding-left: 1px;
    border-bottom: 1px solid #b3afa9;
}

.log .pane {
    height: 85px;
    flex: none;
}

.log .gutter {
    width: 15px;
}
```
